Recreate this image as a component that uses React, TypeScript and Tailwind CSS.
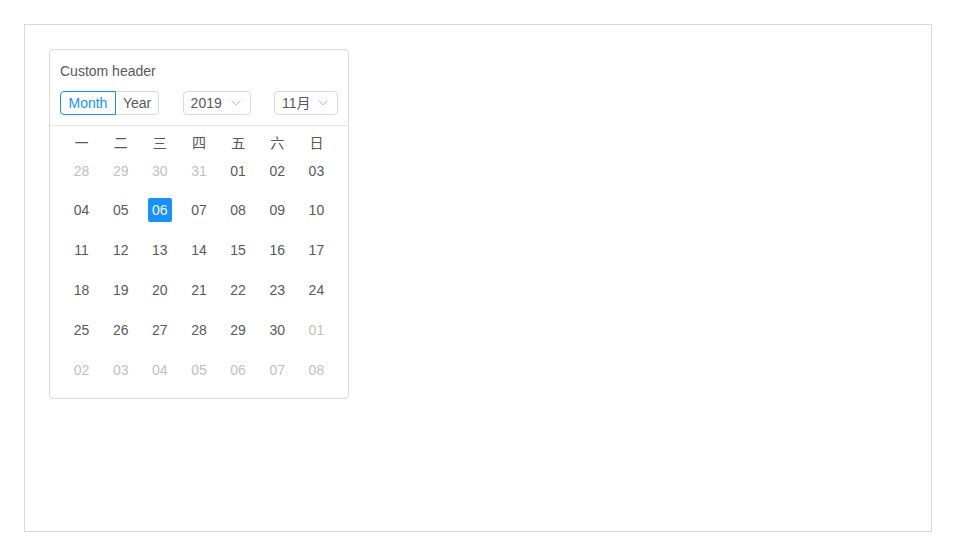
import React from "react";

const WEEKDAYS = ["一", "二", "三", "四", "五", "六", "日"];

type Cell = { label: string; muted?: boolean; selected?: boolean };

function buildWeeks(): Cell[][] {
  const cells: Cell[] = [];
  for (const d of [28, 29, 30, 31]) cells.push({ label: String(d), muted: true });
  for (let d = 1; d <= 30; d++) {
    cells.push({ label: String(d).padStart(2, "0"), selected: d === 6 });
  }
  for (let d = 1; d <= 8; d++) cells.push({ label: String(d).padStart(2, "0"), muted: true });
  const weeks: Cell[][] = [];
  for (let i = 0; i < 6; i++) weeks.push(cells.slice(i * 7, i * 7 + 7));
  return weeks;
}

function Chevron() {
  return (
    <svg width="10" height="6" viewBox="0 0 10 6" fill="none" className="shrink-0">
      <path d="M0.5 0.5 L5 5 L9.5 0.5" stroke="#bfbfbf" strokeWidth="1" />
    </svg>
  );
}

function SmallSelect({ value, className }: { value: string; className?: string }) {
  return (
    <div
      className={`flex h-[24px] items-center justify-between rounded-[4px] border border-[#d9d9d9] bg-white pl-[7px] pr-[9px] text-[14px] text-[#595959] ${className ?? ""}`}
    >
      <span>{value}</span>
      <Chevron />
    </div>
  );
}

export default function App() {
  const weeks = buildWeeks();
  return (
    <div
      className="min-h-[556px] bg-white p-[24px] text-[14px] text-[#595959]"
      style={{ fontFamily: '"Liberation Sans", Arial, "Noto Sans CJK SC", sans-serif' }}
    >
      <div className="h-[508px] border border-[#d9d9d9] p-[24px]">
        <div className="w-[300px] rounded-[4px] border border-[#d9d9d9]">
          {/* custom header */}
          <div className="border-b border-[#e8e8e8] px-[10px] pt-[11px] pb-[10px]">
            <div className="mb-[9px] leading-[21px]">Custom header</div>
            <div className="flex items-center justify-between">
              <div className="flex h-[24px] text-[14px]">
                <div className="z-[1] flex items-center rounded-l-[4px] border border-[#1890ff] px-[7.5px] text-[#1890ff]">
                  Month
                </div>
                <div className="-ml-px flex items-center rounded-r-[4px] border border-[#d9d9d9] px-[7px]">
                  Year
                </div>
              </div>
              <SmallSelect value="2019" className="w-[68px]" />
              <SmallSelect value="11月" className="w-[64px]" />
            </div>
          </div>

          {/* body */}
          <div className="px-[12px] py-[8px]">
            <div className="grid h-[18px] grid-cols-7 items-center text-center leading-[18px]">
              {WEEKDAYS.map((w) => (
                <div key={w}>{w}</div>
              ))}
            </div>
            {weeks.map((week, wi) => (
              <div
                key={wi}
                className={`grid grid-cols-7 items-center ${wi === 0 ? "h-[38px]" : "h-[40px]"}`}
              >
                {week.map((c, ci) => (
                  <div key={ci} className="flex justify-center">
                    <div
                      className={`flex h-[24px] w-[24px] items-center justify-center rounded-[2px] ${
                        c.selected
                          ? "bg-[#1890ff] text-white"
                          : c.muted
                            ? "text-[#bfbfbf]"
                            : "text-[#595959]"
                      }`}
                    >
                      {c.label}
                    </div>
                  </div>
                ))}
              </div>
            ))}
          </div>
        </div>
      </div>
    </div>
  );
}
